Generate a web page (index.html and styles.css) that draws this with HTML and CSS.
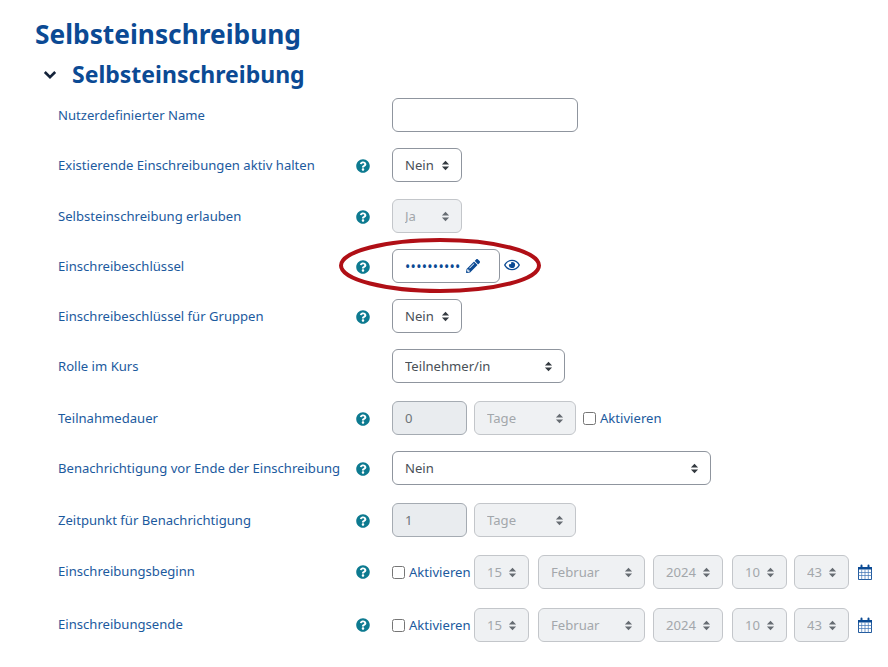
FILE: index.html
```html
<!DOCTYPE html>
<html lang="de">
<head>
    <meta charset="UTF-8">
    <title>Selbsteinschreibung</title>
    <link rel="stylesheet" href="styles.css">
</head>
<body>
    <svg class="defs" width="0" height="0">
        <symbol id="help" viewBox="0 0 512 512"><path d="M504 256c0 136.997-111.043 248-248 248S8 392.997 8 256C8 119.083 119.043 8 256 8s248 111.083 248 248zM262.655 90c-54.497 0-89.255 22.957-116.549 63.758-3.536 5.286-2.353 12.415 2.715 16.258l34.699 26.31c5.205 3.947 12.621 3.008 16.665-2.122 17.864-22.658 30.113-35.797 57.303-35.797 20.429 0 45.698 13.148 45.698 32.958 0 14.976-12.363 22.667-32.534 33.976C247.128 238.528 216 254.941 216 296v4c0 6.627 5.373 12 12 12h56c6.627 0 12-5.373 12-12v-1.333c0-28.462 83.186-29.647 83.186-106.667 0-58.002-60.165-102-116.531-102zM256 338c-25.365 0-46 20.635-46 46 0 25.364 20.635 46 46 46s46-20.636 46-46c0-25.365-20.635-46-46-46z"/></symbol>
        <symbol id="calendar" viewBox="0 0 14 16">
            <path d="M.5 3.500h13v12H.5z" fill="none" stroke="currentColor" stroke-width=".9"/>
            <path d="M0 3h14v2.500H0z"/>
            <path d="M2.500 1.500a1 1 0 0 1 2 0V4a1 1 0 0 1-2 0zM9.500 1.500a1 1 0 0 1 2 0V4a1 1 0 0 1-2 0z"/>
            <path d="M.5 8.500h13M.5 11.500h13M3.700 5.500v10M7 5.500v10M10.300 5.500v10" fill="none" stroke="#3f72b5" stroke-width=".7"/>
        </symbol>
    </svg>

    <h1>Selbsteinschreibung</h1>
    <h2>
        <svg class="chevron" viewBox="0 0 14 10"><path d="M1.800 2l5.200 5.200L12.200 2" fill="none" stroke="currentColor" stroke-width="2.600"/></svg>
        Selbsteinschreibung
    </h2>

    <form class="form">
        <div class="row">
            <label class="name">Nutzerdefinierter Name</label>
            <span class="help"></span>
            <input class="field w-name" type="text">
        </div>
        <div class="row">
            <label class="name">Existierende Einschreibungen aktiv halten</label>
            <svg class="help"><use href="#help"/></svg>
            <select class="field w-yesno"><option>Nein</option></select>
        </div>
        <div class="row gap-17">
            <label class="name">Selbsteinschreibung erlauben</label>
            <svg class="help"><use href="#help"/></svg>
            <select class="field w-yesno" disabled><option>Ja</option></select>
        </div>
        <div class="row">
            <label class="name">Einschreibeschlüssel</label>
            <svg class="help"><use href="#help"/></svg>
            <span class="field key">
                <span class="dots">••••••••••</span>
                <svg class="pencil" viewBox="0 0 512 512"><path d="M497.900 142.100l-46.100 46.100c-4.700 4.700-12.300 4.700-17 0l-111-111c-4.700-4.700-4.700-12.300 0-17l46.100-46.100c18.700-18.700 49.100-18.700 67.900 0l60.100 60.100c18.800 18.700 18.800 49.100 0 67.900zM284.200 99.800L21.600 362.400.4 483.900c-2.900 16.400 11.400 30.600 27.800 27.800l121.500-21.300 262.600-262.600c4.700-4.700 4.700-12.300 0-17l-111-111c-4.800-4.700-12.400-4.700-17.100 0zM124.100 339.900c-5.500-5.500-5.500-14.300 0-19.800l154-154c5.500-5.500 14.300-5.500 19.800 0s5.500 14.300 0 19.800l-154 154c-5.500 5.500-14.300 5.500-19.800 0zM88 424h48v36.300l-64.500 11.300-31.100-31.100L51.700 376H88v48z"/></svg>
            </span>
            <svg class="eye" viewBox="0 0 576 512"><path d="M288 144a110.940 110.940 0 0 0-31.240 5 55.400 55.400 0 0 1 7.240 27 56 56 0 0 1-56 56 55.400 55.400 0 0 1-27-7.240A111.710 111.710 0 1 0 288 144zm284.520 97.400C518.290 135.590 410.930 64 288 64S57.680 135.640 3.480 241.410a32.350 32.350 0 0 0 0 29.190C57.710 376.410 165.070 448 288 448s230.320-71.640 284.520-177.410a32.350 32.350 0 0 0 0-29.190zM288 400c-98.650 0-189.090-55-237.930-144C98.910 167 189.340 112 288 112s189.090 55 237.930 144C477.100 345 386.660 400 288 400z"/></svg>
            <svg class="circle" viewBox="0 0 202 55"><ellipse cx="101" cy="27.500" rx="99" ry="25.500"/></svg>
        </div>
        <div class="row">
            <label class="name">Einschreibeschlüssel für Gruppen</label>
            <svg class="help"><use href="#help"/></svg>
            <select class="field w-yesno"><option>Nein</option></select>
        </div>
        <div class="row">
            <label class="name">Rolle im Kurs</label>
            <span class="help"></span>
            <select class="field w-role"><option>Teilnehmer/in</option></select>
        </div>
        <div class="row gap-18">
            <label class="name">Teilnahmedauer</label>
            <svg class="help"><use href="#help"/></svg>
            <input class="field w-num" type="text" value="0" readonly>
            <select class="field w-unit" disabled><option>Tage</option></select>
            <input class="check" type="checkbox">
            <span class="link">Aktivieren</span>
        </div>
        <div class="row">
            <label class="name">Benachrichtigung vor Ende der Einschreibung</label>
            <svg class="help"><use href="#help"/></svg>
            <select class="field w-wide"><option>Nein</option></select>
        </div>
        <div class="row gap-18">
            <label class="name">Zeitpunkt für Benachrichtigung</label>
            <svg class="help"><use href="#help"/></svg>
            <input class="field w-num" type="text" value="1" readonly>
            <select class="field w-unit" disabled><option>Tage</option></select>
        </div>
        <div class="row row-date gap-18">
            <label class="name">Einschreibungsbeginn</label>
            <svg class="help"><use href="#help"/></svg>
            <input class="check check-date" type="checkbox">
            <span class="link link-date">Aktivieren</span>
            <select class="field w-day" disabled><option>15</option></select>
            <select class="field w-month" disabled><option>Februar</option></select>
            <select class="field w-year" disabled><option>2024</option></select>
            <select class="field w-hour" disabled><option>10</option></select>
            <select class="field w-min" disabled><option>43</option></select>
            <svg class="cal"><use href="#calendar"/></svg>
        </div>
        <div class="row row-date gap-19">
            <label class="name">Einschreibungsende</label>
            <svg class="help"><use href="#help"/></svg>
            <input class="check check-date" type="checkbox">
            <span class="link link-date">Aktivieren</span>
            <select class="field w-day" disabled><option>15</option></select>
            <select class="field w-month" disabled><option>Februar</option></select>
            <select class="field w-year" disabled><option>2024</option></select>
            <select class="field w-hour" disabled><option>10</option></select>
            <select class="field w-min" disabled><option>43</option></select>
            <svg class="cal"><use href="#calendar"/></svg>
        </div>
    </form>
</body>
</html>
```

FILE: styles.css
```css
html {
    overflow: hidden;
}
body {
    margin: 0;
    padding: 0 0 0 35px;
    background: #ffffff;
    font-family: "Noto Sans", "Open Sans", sans-serif;
    color: #495057;
}
.defs {
    position: absolute;
}
h1 {
    margin: 0;
    padding-top: 15px;
    font-size: 26.3px;
    line-height: 38px;
    font-weight: 700;
    color: #0b4a94;
}
h2 {
    display: flex;
    align-items: center;
    margin: 5px 0 0 8px;
    font-size: 23px;
    line-height: 32px;
    font-weight: 700;
    color: #0b4a94;
}
.chevron {
    width: 14px;
    height: 10px;
    margin: 2px 15px 0 0;
    color: #14233a;
}
.form {
    margin: 8px 0 0 23px;
}
.row {
    display: flex;
    align-items: center;
    height: 34px;
    margin-top: 16px;
    position: relative;
}
.row:first-child {
    margin-top: 0;
}
.gap-17 {
    margin-top: 17px;
}
.gap-18 {
    margin-top: 18px;
}
.gap-19 {
    margin-top: 19px;
}
.name {
    width: 298px;
    flex: none;
    font-size: 13.1px;
    color: #1c5a9e;
}
.help {
    width: 14px;
    height: 14px;
    flex: none;
    margin: 1px 22px 0 0;
    fill: #0d7a90;
}
.row-date .name {
    margin-bottom: 2px;
}
.row-date .help {
    margin-top: 0;
    margin-bottom: 1px;
}
.field {
    box-sizing: border-box;
    height: 34px;
    flex: none;
    padding: 0 12px;
    border: 1px solid #8f959e;
    border-radius: 6px;
    background-color: #ffffff;
    font-family: inherit;
    font-size: 13.1px;
    color: #495057;
}
select.field {
    appearance: none;
    background-image: url("data:image/svg+xml,%3Csvg xmlns='http://www.w3.org/2000/svg' viewBox='0 0 10 12'%3E%3Cpath d='M5 .8 9 5H1zM5 11.200 1 7h8z' fill='%23343a40'/%3E%3C/svg%3E");
    background-repeat: no-repeat;
    background-position: right 11px center;
    background-size: 9px 11px;
}
select.field:disabled {
    background-color: #eff1f3;
    border-color: #c3c6ca;
    color: #a3a7ab;
    opacity: 1;
    background-image: url("data:image/svg+xml,%3Csvg xmlns='http://www.w3.org/2000/svg' viewBox='0 0 10 12'%3E%3Cpath d='M5 .8 9 5H1zM5 11.200 1 7h8z' fill='%23666c72'/%3E%3C/svg%3E");
}
input[readonly].field {
    background-color: #e9ecef;
    border-color: #a5abb2;
    color: #6e7479;
    outline: none;
}
.w-name { width: 186px; }
.w-yesno { width: 70px; }
.w-role { width: 173px; }
.w-wide { width: 319px; }
.w-num { width: 75px; margin-right: 7px; }
.w-unit { width: 102px; }
.w-day { width: 55px; margin-right: 9px; }
.w-month { width: 107px; margin-right: 8px; }
.w-year { width: 70px; margin-right: 9px; }
.w-hour { width: 55px; margin-right: 7px; }
.w-min { width: 55px; }
.key {
    display: flex;
    align-items: center;
    width: 108px;
}
.dots {
    font-size: 14px;
    letter-spacing: 0.3px;
    color: #0b4a94;
}
.pencil {
    width: 14px;
    height: 14px;
    margin-left: 5px;
    fill: #0b4a94;
}
.eye {
    width: 16px;
    height: 14px;
    margin: -2px 0 0 4px;
    fill: #0b4a94;
}
.circle {
    position: absolute;
    left: 281px;
    top: -11px;
    width: 202px;
    height: 55px;
    fill: none;
    stroke: #b00f16;
    stroke-width: 4;
}
.check {
    width: 13px;
    height: 13px;
    margin: 0 4px 0 7px;
    flex: none;
}
.check-date {
    margin-left: 0;
    margin-right: 4px;
}
.link {
    font-size: 13.1px;
    color: #1c5a9e;
}
.link-date {
    width: 65px;
    flex: none;
}
.cal {
    width: 14px;
    height: 16px;
    margin-left: 9px;
    fill: #0b4a94;
    color: #0b4a94;
}
```
